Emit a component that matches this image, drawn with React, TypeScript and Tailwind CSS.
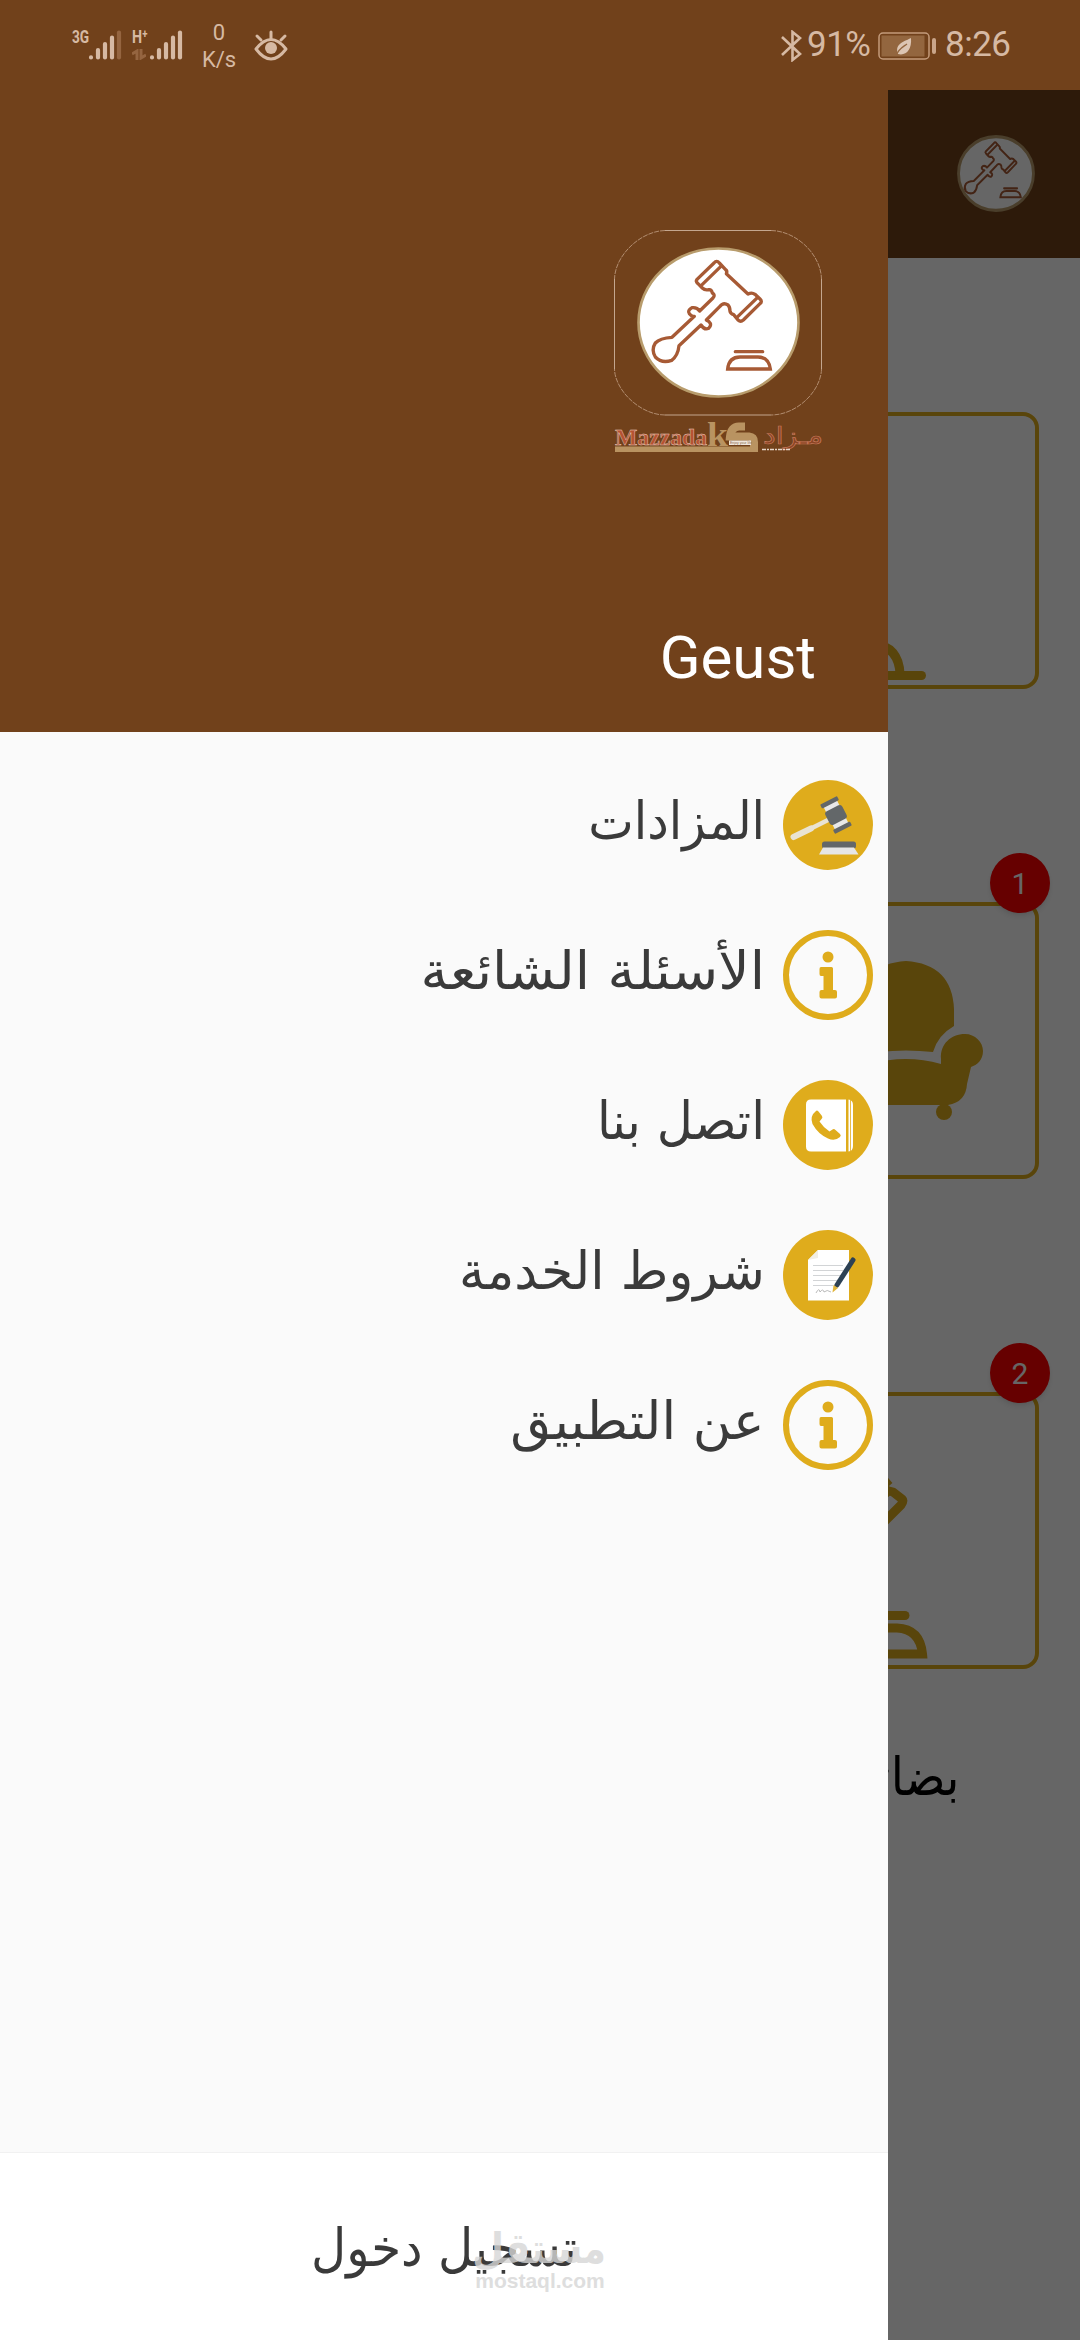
import React from "react";
import {clsx} from "clsx";

//-----------------------------------------------------------------------------------------------

const gavelPath =
  "M369 160 L318 209 Q313 215 321 222 L334 235 Q342 243 353 240 Q362 239 364 250 Q374 256 366 265 L326 304 Q318 292 303 294 Q288 303 295 312 Q303 322 310 320 L243 383 Q207 385 193 400 Q180 420 193 442 Q212 462 242 452 Q261 438 264 408 L330 346 Q340 362 353 356 Q364 345 354 336 L346 331 L386 291 Q397 277 411 286 Q417 292 417 305 Q418 312 428 315 L441 331 Q449 338 457 331 L507 282 Q515 276 507 268 L492 254 Q483 247 471 253 L406 192 Q410 184 403 179 L385 160 Q377 150 369 160 Z";

type GavelMarkProps = {
  className?: string;
  ring?: number;
  line?: number;
};

const GavelMark = ({className, ring = 8, line = 10}: GavelMarkProps) => (
  <svg viewBox="138 112 489 453" preserveAspectRatio="none" className={className} fill="none">
    <ellipse cx="382.500" cy="338.500" rx={244 - ring / 2} ry={226 - ring / 2} fill="white" stroke="#b89c6c"
             strokeWidth={ring}/>
    <g stroke="#a75a35" strokeWidth={line} strokeLinejoin="round">
      <path d={gavelPath}/>
      <path d="M392 168 L328 230 M500 263 L437 324"/>
      <path d="M433 426 H515" strokeLinecap="round"/>
      <path d="M410 478 Q414 442 447 442 H501 Q533 442 538 478 Z" strokeLinejoin="miter"/>
    </g>
  </svg>
);

const BrandLogo = () => (
  <svg viewBox="0 0 212 226" className="h-[226px] w-[212px]" fill="none">
    <path
      d="M52 1.500 H158 M208.500 50 V140 M158 186 H52 M1.500 140 V50"
      stroke="#c4a68e" strokeWidth="1"
    />
    <path
      d="M52 1.500 C28 2 2 26 1.500 50 M158 1.500 C184 2 208 26 208.500 50 M208.500 140 C208 162 184 186 158 186 M52 186 C28 186 2 162 1.500 140"
      stroke="#b28d70" strokeWidth="1" strokeDasharray="5 1"
    />
    <text x="2" y="216" fontFamily="Liberation Serif, serif" fontWeight="700" fontSize="23" fill="#b65332"
          stroke="#ead2c4" strokeWidth=".4" textLength="92" lengthAdjust="spacingAndGlyphs">Mazzada
    </text>
    <path d="M2 217.500 H145 V223 H2 Z" fill="#b99361"/>
    <text x="94" y="217" fontFamily="Liberation Serif, serif" fontWeight="700" fontSize="34" fill="#b99361"
          textLength="21" lengthAdjust="spacingAndGlyphs">k
    </text>
    <path d="M132 197.500 H126 Q118 198 117 207.500 H136 Q141 208 141 213 V223" stroke="#b99361" strokeWidth="8"/>
    <path d="M116 211.500 H138 V216 H116 Z" fill="#efe6dc"/>
    <text x="117" y="215" fontFamily="Liberation Sans, sans-serif" fontSize="3.500" fill="#8a6a4a">Enjoy your life</text>
    <text x="210" y="215" direction="rtl" fontFamily="DejaVu Sans, sans-serif" fontSize="24" fill="#8a4423"
          stroke="#c5785a" strokeWidth=".7" textLength="60" lengthAdjust="spacingAndGlyphs">مـزاد
    </text>
    <path d="M149 220.500 H178" stroke="#e6d5c8" strokeWidth="1.500" strokeDasharray="4 1 2 1"/>
  </svg>
);

//-----------------------------------------------------------------------------------------------

const SignalBars = ({weak}: { weak?: boolean }) => (
  <svg viewBox="0 0 34 32" className="h-[32px] w-[34px]" stroke="#d6b9a3" strokeWidth="4.200" strokeLinecap="round">
    <path d="M3 28.500 V28.400 M10 28.500 V21 M17 28.500 V15 M24 28.500 V8.500"/>
    <path d="M31 28.500 V3.500" stroke={weak ? "#956540" : "#d6b9a3"}/>
  </svg>
);

const StatusBar = () => (
  <div className="absolute inset-x-0 top-0 z-20 flex h-[90px] justify-between bg-[#71411b] pl-[72px] pr-[69px] font-['Roboto',sans-serif] text-[#d6b9a3]">
    <div className="flex items-start">
      <div className="flex w-[60px] pt-[29px]">
        <span className="w-[16px] origin-left scale-x-[0.72] text-[19px] font-bold leading-[16px]">3G</span>
        <SignalBars weak/>
      </div>
      <div className="flex w-[69px] pt-[29px]">
        <div className="relative w-[17px]">
          <span className="block origin-left scale-x-[0.75] text-[19px] font-bold leading-[16px]">H⁺</span>
          <svg viewBox="0 0 14 11" className="absolute left-0 top-[20px] h-[11px] w-[14px]" fill="none"
               stroke="#956540" strokeWidth="3">
            <path d="M0 5 L5 2 V11 M9 0 V9 L14 6"/>
          </svg>
        </div>
        <SignalBars/>
      </div>
      <div className="w-[36px] pt-[19px] text-center text-[22px] leading-[27px]">
        <div>0</div>
        <div className="whitespace-nowrap">K/s</div>
      </div>
      <svg viewBox="0 0 34 32" className="ml-[17px] mt-[29px] h-[32px] w-[34px]" fill="none" stroke="#d6b9a3"
           strokeWidth="3">
        <path d="M2 20 Q17 1 32 20 Q17 40 2 20 Z" strokeLinejoin="round"/>
        <circle cx="17" cy="19" r="6" fill="#d6b9a3" stroke="none"/>
        <path d="M17 9 V3 M7 11 L3 7 M27 11 L31 7" strokeLinecap="round"/>
      </svg>
    </div>
    <div className="flex items-center pt-[1px] text-[35px]">
      <svg viewBox="0 0 22 32" className="h-[32px] w-[22px]" fill="none" stroke="#d6b9a3" strokeWidth="2.600">
        <path d="M1 7 L19 24 L11.500 30 V2 L19 8 L1 25"/>
      </svg>
      <span className="ml-[4px] w-[66px] whitespace-nowrap tracking-[-0.5px]">91%</span>
      <svg viewBox="0 0 58 28" className="ml-[5px] h-[28px] w-[58px]" fill="none">
        <rect x="1" y="1" width="50" height="26" rx="4" stroke="#c39b7b" strokeWidth="1.500"/>
        <rect x="3.500" y="3.500" width="43" height="21" fill="#93663f"/>
        <path d="M20 22 C16 11 28 9 33 6 C34 18 28 24 20 22 Z" fill="#dcc5b3"/>
        <path d="M18 24 C20 17 25 15 29 12" stroke="#93663f" strokeWidth="1.300"/>
        <rect x="54" y="6" width="4" height="16" rx="2" fill="#c9a58a"/>
      </svg>
      <span className="ml-[9px] w-[66px] whitespace-nowrap tracking-[-0.5px]">8:26</span>
    </div>
  </div>
);

//-----------------------------------------------------------------------------------------------

const AuctionIcon = () => (
  <svg viewBox="0 0 90 90" className="size-[90px]">
    <circle cx="45" cy="45" r="45" fill="#dfac1c"/>
    <path d="M10.500 57 L28 48.500" stroke="#e9e3d2" strokeWidth="6" strokeLinecap="round"/>
    <path d="M26 49.500 L46 39.500" stroke="#e9e3d2" strokeWidth="4.500"/>
    <g transform="translate(53 35) rotate(-27)">
      <rect x="-7.500" y="-13" width="15" height="26" fill="#e8e8e8"/>
      <rect x="-9.500" y="-7.500" width="19" height="15" rx="3" fill="#636769"/>
      <rect x="-9.500" y="-16.500" width="19" height="4.500" rx="1" fill="#636769"/>
      <rect x="-9.500" y="12" width="19" height="4.500" rx="1" fill="#636769"/>
    </g>
    <rect x="39" y="61.500" width="34" height="7" rx="2.500" fill="#636769"/>
    <path d="M40 67.500 H71 L75.500 74.500 H36 Z" fill="#e6e6e6"/>
  </svg>
);

const InfoIcon = () => (
  <svg viewBox="0 0 90 90" className="size-[90px]">
    <circle cx="45" cy="45" r="42" fill="none" stroke="#dfac1c" strokeWidth="6"/>
    <g fill="#dfac1c">
      <circle cx="45" cy="27" r="5.500"/>
      <path d="M38 37 H48.500 Q50 37 50 38.500 V60 H52 Q54 60 54 62 V66.500 Q54 68.500 52 68.500 H38.500 Q36.500 68.500 36.500 66.500 V62 Q36.500 60 38.500 60 H40.500 V46 H38 Q36.500 46 36.500 44 V39 Q36.500 37 38 37 Z"/>
    </g>
  </svg>
);

const ContactIcon = () => (
  <svg viewBox="0 0 90 90" className="size-[90px]">
    <circle cx="45" cy="45" r="45" fill="#dfac1c"/>
    <path d="M28 19.500 H63 V71.500 H28 Q23 71.500 23 66.500 V24.500 Q23 19.500 28 19.500 Z" fill="white"/>
    <path d="M65.500 19.500 Q70 20 70 25 V66 Q70 71 65.500 71.500 Z" fill="white"/>
    <path d="M67.500 20 V71" stroke="#dfac1c" strokeWidth=".8"/>
    <path d="M33 31 Q34 30 35.500 31.500 L39 36 Q40 38 38.500 39 L36.500 41.500 Q40 47 46.500 51.500 L49.500 49.500 Q51 48.500 52.500 50 L57 54 Q58.500 55.500 57 57 Q52 61.500 45 58.500 Q35 54 29.500 44 Q26.500 36 33 31 Z" fill="#dfac1c"/>
  </svg>
);

const TermsIcon = () => (
  <svg viewBox="0 0 90 90" className="size-[90px]">
    <circle cx="45" cy="45" r="45" fill="#dfac1c"/>
    <path d="M35 20 H66 V70.500 H25 V30 Z" fill="white"/>
    <path d="M25 30 L35 28 V20 Z" fill="#f1eee4"/>
    <path d="M30 35.500 H60 M30 40.500 H60 M30 45.500 H58 M30 50.500 H54 M30 55.500 H50" stroke="#d2d4d6"
          strokeWidth="1.200"/>
    <path d="M33 63 Q36 57 37 62 Q40 58 41 62 Q44 59 48 62" stroke="#aaa" strokeWidth=".8" fill="none"/>
    <path d="M70 30 L54 55" stroke="#2d4154" strokeWidth="5" strokeLinecap="round"/>
    <path d="M50.500 55 L55 58 L49.500 62.500 Z" fill="#e0b43a"/>
  </svg>
);

//-----------------------------------------------------------------------------------------------

const menu = [
  {label: "المزادات", icon: <AuctionIcon/>, stretch: "scale-x-[0.93]"},
  {label: "الأسئلة الشائعة", icon: <InfoIcon/>, stretch: "scale-x-[1.06]"},
  {label: "اتصل بنا", icon: <ContactIcon/>, stretch: "scale-x-[0.955]"},
  {label: "شروط الخدمة", icon: <TermsIcon/>, stretch: "scale-x-[0.99]"},
  {label: "عن التطبيق", icon: <InfoIcon/>, stretch: "scale-x-[1.015]"},
];

const Drawer = () => (
  <aside className="absolute left-0 top-0 z-10 flex h-full w-[888px] flex-col bg-[#fafafa]">
    <header className="flex h-[732px] shrink-0 flex-col items-end bg-[#71411b] pr-[63px] pt-[229px]">
      <div className="relative">
        <BrandLogo/>
        <GavelMark className="absolute left-[24px] top-[18px] h-[151px] w-[163px]"/>
      </div>
      <div className="mr-[9px] mt-[167px] font-['Roboto',sans-serif] text-[60px] leading-[72px] text-white">Geust</div>
    </header>
    <nav className="flex flex-1 flex-col gap-[60px] pr-[15px] pt-[48px]" dir="rtl">
      {menu.map(({label, icon, stretch}) => (
        <a key={label} className="flex h-[90px] items-center gap-[18px]">
          {icon}
          <span
            className={clsx("mb-[8px] origin-right whitespace-nowrap font-['DejaVu_Sans',sans-serif] text-[52px] leading-[60px] text-[#3a3a3a]", stretch)}>
            {label}
          </span>
        </a>
      ))}
    </nav>
    <footer className="relative flex h-[188px] items-center justify-center border-t border-[#f1f1f1] bg-white">
      <span
        className="mt-[2px] scale-x-[0.93] whitespace-nowrap font-['DejaVu_Sans',sans-serif] text-[52px] leading-[60px] text-[#3a3a3a]"
        dir="rtl">تسجيل دخول</span>
      <div className="absolute left-[474px] top-[75px] w-[132px] text-center font-bold text-[#d6d6d6] opacity-80">
        <div
          className="origin-right scale-x-[0.87] whitespace-nowrap font-['DejaVu_Sans',sans-serif] text-[42px] leading-[42px]"
          dir="rtl">مستقل
        </div>
        <div className="font-['Liberation_Sans',sans-serif] text-[21px] leading-[22px]">mostaql.com</div>
      </div>
    </footer>
  </aside>
);

//-----------------------------------------------------------------------------------------------

type CardProps = {
  count?: number;
  label?: string;
  children: React.ReactNode;
};

const CategoryCard = ({count, label, children}: CardProps) => (
  <div className="h-[490px] w-[266px]">
    <div className="relative h-[277px] rounded-[16px] border-4 border-[#dfac1c]">
      <svg viewBox="4 4 258 269" className="h-full w-full" fill="none">{children}</svg>
      {count && (
        <span
          className="absolute -right-[15px] -top-[53px] flex size-[60px] items-center justify-center rounded-full bg-[#ff0000] font-['Roboto',sans-serif] text-[30px] text-white shadow-md">
          {count}
        </span>
      )}
    </div>
    {label && (
      <div
        className="mt-[78px] scale-x-[0.91] text-center font-['DejaVu_Sans',sans-serif] text-[52px] leading-[60px] text-black"
        dir="rtl">{label}</div>
    )}
  </div>
);

const HomePage = () => (
  <div className="flex h-full flex-col">
    <div className="mt-[90px] flex h-[168px] shrink-0 items-start justify-end bg-[#71411b] pr-[45px] pt-[45px]">
      <GavelMark className="h-[77px] w-[78px]" ring={18} line={12}/>
    </div>
    <main className="flex flex-1 flex-col items-end pr-[41px] pt-[154px]">
      <CategoryCard>
        <path d="M60 263.500 H148.500" stroke="#dfac1c" strokeWidth="9" strokeLinecap="round"/>
        <path d="M72 263 V252 Q78 231 100 231 Q126 235 127 262" stroke="#dfac1c" strokeWidth="9"/>
      </CategoryCard>
      <CategoryCard count={1}>
        <g fill="#dfac1c">
          <path d="M85 107 V124 Q101 133 106 150 Q133 147 160 150 Q165 133 181 124 V107 Q179 62 133 59 Q87 62 85 107 Z"/>
          <path d="M97 162 Q133 152 168 162 V157 C167 142 178 132 192 132 C202 132 210 140 210 149 C210 158 204 163 198 165 L194 182 Q193 200 175 203 H91 Q73 200 72 182 L68 165 C62 163 56 158 56 149 C56 140 64 132 74 132 C88 132 99 142 97 162 Z"/>
          <circle cx="171" cy="210" r="8"/>
          <circle cx="95" cy="210" r="8"/>
        </g>
      </CategoryCard>
      <CategoryCard count={2} label="بضائع">
        <g stroke="#dfac1c" strokeWidth="9" strokeLinejoin="round">
          <path d="M80 52 L116 94 M116 99 L120 100 L129 107 Q131 109 128 113 L90 151 L75 138 L118 96"/>
          <path d="M70 223.500 H132" strokeLinecap="round"/>
          <path d="M60 262 Q64 236 90 236 H124 Q147 237 149.500 262 Z" strokeLinejoin="miter"/>
        </g>
      </CategoryCard>
    </main>
    <div className="absolute inset-0 bg-black/60"/>
  </div>
);

export default function App() {
  return (
    <div className="relative h-[2340px] w-[1080px] overflow-hidden bg-white">
      <HomePage/>
      <Drawer/>
      <StatusBar/>
    </div>
  )
}
